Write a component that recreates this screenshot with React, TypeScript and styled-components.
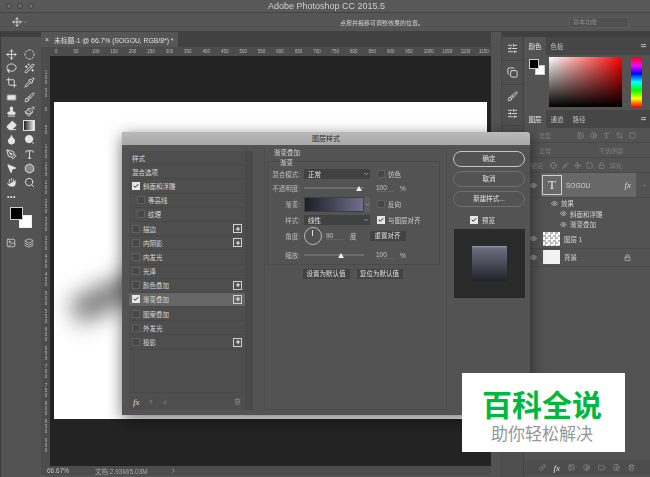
import React from "react";
import styled, { createGlobalStyle } from "styled-components";
import {
  Bandage, Brush, ChevronDown, ChevronRight, ChevronUp, CircleDashed, Copy, Crop, Droplet, Eraser, Eye, Folder, FilePlus,
  Hand, Hexagon, Image as ImageIcon, Lasso, Link, Lock, MousePointer2, Move, PenTool, Pipette, Plus,
  Search, Stamp, Trash2, Type, WandSparkles, Check, Layers, SlidersHorizontal, Crosshair, Square, ArrowUp, ArrowDown, Paintbrush, Contrast,
} from "lucide-react";

const Global = createGlobalStyle`
  html, body { margin: 0; padding: 0; background: #535353; }
  body { font-family: "Liberation Sans", "Noto Sans CJK SC", sans-serif; }
`;

const Stage = styled.div`
  position: relative;
  width: 650px;
  height: 477px;
  overflow: hidden;
  color: #d8d8d8;
  font-size: 6.5px;
  white-space: nowrap;
`;

const Screen = styled.div`
  width: 650px;
  height: 477px;
  display: flex;
  flex-direction: column;
  background: #535353;
  filter: blur(0.35px);
`;

const TitleBar = styled.div`
  height: 13px;
  flex: none;
  display: flex;
  align-items: center;
  padding-left: 6px;
  gap: 5px;
  background: #585858;
  border-bottom: 1px solid #444;
  box-sizing: border-box;
`;

const Light = styled.span`
  width: 6px;
  height: 6px;
  border-radius: 50%;
  background: #6a6a6a;
  border: 1px solid #3f3f3f;
  box-sizing: border-box;
`;

const AppTitle = styled.div`
  flex: 1;
  text-align: center;
  font-size: 9px;
  color: #cfcfcf;
  margin-right: 36px;
`;

const OptionsBar = styled.div`
  height: 19px;
  flex: none;
  display: flex;
  align-items: center;
  padding: 0 5px 0 12px;
  background: #555;
  border-bottom: 1px solid #414141;
  box-sizing: border-box;
`;

const Hint = styled.div`
  margin-left: 312px;
  color: #d0d0d0;
  font-size: 6px;
  width: 229px;
`;

const WorkspaceSelect = styled.div`
  width: 60px;
  height: 11px;
  background: #505050;
  border: 1px solid #5c5c5c;
  box-sizing: border-box;
  color: #8d8d8d;
  font-size: 6px;
  line-height: 9px;
  padding-left: 3px;
`;

const Main = styled.div`
  flex: 1;
  display: flex;
  min-height: 0;
`;

const ToolColumn = styled.div`
  width: 41px;
  flex: none;
  display: flex;
  flex-direction: column;
  border-left: 1px solid #3c3c3c;
  box-sizing: border-box;
`;

const Strip = styled.div`
  height: 5px;
  flex: none;
  background: #3f3f3f;
`;

const ToolGrid = styled.div`
  display: grid;
  grid-template-columns: 18px 18px;
  grid-auto-rows: 14.3px;
  padding: 10px 0 0 1px;
`;

const Tool = styled.div`
  display: flex;
  align-items: center;
  justify-content: center;
  color: #e4e4e4;
`;

const GradientTool = styled.div`
  width: 10px;
  height: 9px;
  border: 1px solid #ddd;
  background: linear-gradient(90deg, #222, #eee);
`;

const MoreDots = styled.div`
  font-size: 7px;
  line-height: 7px;
  letter-spacing: 0.5px;
  color: #ddd;
  padding: 3px 0 0 6px;
  font-weight: 700;
`;

const Swatches = styled.div`
  position: relative;
  width: 24px;
  height: 22px;
  margin: 7px 0 0 9px;
`;

const Swatch = styled.div<{ $tone: string; $front?: boolean }>`
  position: absolute;
  width: 13px;
  height: 13px;
  box-sizing: border-box;
  background: ${(p) => p.$tone};
  border: 1px solid ${(p) => (p.$front ? "#ccc" : "#eee")};
  left: ${(p) => (p.$front ? 0 : 9)}px;
  top: ${(p) => (p.$front ? 0 : 8)}px;
  z-index: ${(p) => (p.$front ? 1 : 0)};
`;

const ToolFooter = styled.div`
  display: grid;
  grid-template-columns: 18px 18px;
  padding: 9px 0 0 1px;
`;

const DocColumn = styled.div`
  width: 450px;
  flex: none;
  display: flex;
  flex-direction: column;
`;

const TabBar = styled.div`
  height: 15px;
  flex: none;
  background: #414141;
  display: flex;
`;

const DocTab = styled.div`
  width: 137px;
  background: #555;
  display: flex;
  align-items: center;
  gap: 5px;
  padding-left: 4px;
  box-sizing: border-box;
  font-size: 6.8px;
  color: #e0e0e0;
`;

const HRuler = styled.div`
  height: 9px;
  flex: none;
  display: flex;
  background: #4c4c4c;
  padding-left: 14px;
  overflow: hidden;
  color: #b8b8b8;
  font-size: 4.5px;
  line-height: 9px;
`;

const HMark = styled.span`
  width: 18.45px;
  flex: none;
`;

const DocBody = styled.div`
  flex: 1;
  display: flex;
  min-height: 0;
`;

const VRuler = styled.div`
  width: 9px;
  flex: none;
  background: #4c4c4c;
  padding-top: 14px;
  box-sizing: border-box;
  overflow: hidden;
  color: #b8b8b8;
  font-size: 4.5px;
  line-height: 5px;
  text-align: center;
`;

const VMark = styled.div`
  height: 18.4px;
  width: 4px;
  margin-left: 3px;
  white-space: normal;
  word-break: break-all;
`;

const Pasteboard = styled.div`
  flex: 1;
  background: #232323;
  padding: 46px 0 0 4px;
`;

const Paper = styled.div`
  position: relative;
  width: 433px;
  height: 317px;
  background: #fff;
  overflow: hidden;
`;

const Smear = styled.div`
  position: absolute;
  left: 17px;
  top: 182px;
  width: 74px;
  height: 26px;
  background: #777;
  filter: blur(11px);
  transform: rotate(-25deg);
`;

const StatusBar = styled.div`
  height: 9px;
  flex: none;
  margin-bottom: 2px;
  display: flex;
  align-items: center;
  background: #4c4c4c;
  padding-left: 6px;
  font-size: 6.5px;
  color: #c4c4c4;
`;

const Zoom = styled.span`
  width: 48px;
`;

const DocSize = styled.span`
  width: 75px;
  color: #a8a8a8;
`;

const Gutter = styled.div`
  width: 10px;
  flex: none;
`;

const Dock = styled.div`
  width: 22px;
  flex: none;
  display: flex;
  flex-direction: column;
  background: #4f4f4f;
  border-left: 1px solid #464646;
  box-sizing: border-box;
`;

const DockGroup = styled.div`
  display: flex;
  flex-direction: column;
  align-items: center;
  gap: 6px;
  padding: 6px 0;
  border-bottom: 1px solid #444;
  color: #ddd;
`;

const SidePanels = styled.div`
  width: 127px;
  flex: none;
  display: flex;
  flex-direction: column;
  border-left: 1px solid #424242;
  box-sizing: border-box;
`;

const PanelTabs = styled.div`
  height: 18px;
  flex: none;
  display: flex;
  align-items: stretch;
  background: #464646;
`;

const PanelTab = styled.div<{ $active?: boolean }>`
  width: 22px;
  display: flex;
  align-items: center;
  justify-content: center;
  font-size: 6.5px;
  background: ${(p) => (p.$active ? "#535353" : "transparent")};
  color: ${(p) => (p.$active ? "#e8e8e8" : "#bdbdbd")};
`;

const TabMenu = styled.div`
  margin-left: auto;
  align-self: center;
  width: 5px;
  height: 4px;
  margin-right: 4px;
  background: repeating-linear-gradient(#aaa 0 1px, #555 1px 2px);
`;

const ColorPanel = styled.div`
  height: 55px;
  flex: none;
  display: flex;
  box-sizing: border-box;
  padding-top: 2px;
`;

const ColorChips = styled.div`
  position: relative;
  width: 25px;
  flex: none;
`;

const Chip = styled.div<{ $front?: boolean }>`
  position: absolute;
  width: 10px;
  height: 10px;
  box-sizing: border-box;
  border: 1px solid #ccc;
  left: ${(p) => (p.$front ? 5 : 11)}px;
  top: ${(p) => (p.$front ? 2 : 8)}px;
  background: ${(p) => (p.$front ? "#000" : "#fff")};
  z-index: ${(p) => (p.$front ? 1 : 0)};
`;

const ColorField = styled.div`
  width: 73px;
  height: 50px;
  flex: none;
  background: linear-gradient(to bottom, transparent, #000), linear-gradient(to right, #fff, #f00);
`;

const HueBar = styled.div`
  width: 11px;
  height: 50px;
  margin-left: 9px;
  background: linear-gradient(to bottom, #f00, #f0f 17%, #00f 33%, #0ff 50%, #0f0 66%, #ff0 83%, #f00);
`;

const LayerTools = styled.div<{ $gap?: number }>`
  height: 14px;
  flex: none;
  display: flex;
  align-items: center;
  gap: ${(p) => p.$gap ?? 6}px;
  padding-left: 7px;
  color: #8e8e8e;
  font-size: 6px;
  border-bottom: 1px solid #494949;
`;

const Faded = styled.span<{ $left?: number }>`
  color: #7d7d7d;
  margin-left: ${(p) => p.$left ?? 0}px;
`;

const FilterGap = styled.span`
  width: 14px;
  flex: none;
`;

const LayerList = styled.div`
  display: flex;
  flex-direction: column;
  flex: 1;
  min-height: 0;
`;

const LayerRow = styled.div<{ $h: number }>`
  height: ${(p) => p.$h}px;
  display: flex;
  align-items: center;
  padding-left: 6px;
  flex: none;
  border-bottom: 1px solid #4a4a4a;
`;

const LayerEye = styled.div`
  width: 11px;
  flex: none;
  color: #cfcfcf;
  display: flex;
`;

const LayerBody = styled.div<{ $active?: boolean }>`
  flex: 1;
  height: 100%;
  display: flex;
  align-items: center;
  gap: 3px;
  margin-right: 14px;
  padding: 0 5px 0 1px;
  background: ${(p) => (p.$active ? "#686868" : "transparent")};
`;

const RowCaret = styled.span`
  margin-left: -12px;
  width: 12px;
  display: flex;
  justify-content: center;
  color: #bbb;
`;

const TextThumb = styled.div`
  width: 20px;
  height: 20px;
  flex: none;
  box-sizing: border-box;
  border: 1px solid #d0d0d0;
  display: flex;
  align-items: center;
  justify-content: center;
  font-family: "Liberation Serif", serif;
  font-size: 13px;
  color: #e8e8e8;
`;

const Thumb = styled.div<{ $checker?: boolean }>`
  width: 17px;
  height: 14px;
  flex: none;
  margin-left: 1px;
  background: ${(p) => (p.$checker ? "repeating-conic-gradient(#bbb 0 25%, #fff 0 50%) 0 0 / 5px 5px" : "#f2f2f2")};
`;

const LayerName = styled.span`
  flex: 1;
  color: #d4d4d4;
  padding-left: 1px;
`;

const FxMark = styled.span`
  font-family: "Liberation Serif", serif;
  font-style: italic;
  font-size: 9px;
  color: #ddd;
`;

const EffectRow = styled.div<{ $indent: number }>`
  height: 10.5px;
  flex: none;
  display: flex;
  align-items: center;
  gap: 3px;
  padding-left: ${(p) => p.$indent}px;
  color: #d4d4d4;
  & > svg { flex: none; }
`;

const LayerFooter = styled.div`
  height: 15px;
  flex: none;
  margin-bottom: 2px;
  display: flex;
  align-items: center;
  justify-content: flex-end;
  gap: 8px;
  padding-right: 15px;
  background: #4d4d4d;
  color: #949494;
`;

/* dialog floats over the workspace */
const Dialog = styled.div`
  position: absolute;
  left: 122px;
  top: 132px;
  width: 408px;
  height: 283px;
  display: flex;
  flex-direction: column;
  background: #535353;
  border-radius: 3px 3px 0 0;
  box-shadow: 0 4px 16px rgba(0, 0, 0, 0.55);
  filter: blur(0.35px);
`;

const DialogTitle = styled.div`
  height: 13px;
  flex: none;
  text-align: center;
  font-size: 7px;
  line-height: 13px;
  color: #2e2e2e;
  background: linear-gradient(#b9b9b9, #a9a9a9);
  border-radius: 3px 3px 0 0;
`;

const DialogBody = styled.div`
  flex: 1;
  display: flex;
  padding: 6px 5px 5px 7px;
  min-height: 0;
`;

const StyleList = styled.div`
  width: 124px;
  flex: none;
  display: flex;
  flex-direction: column;
  background: #4e4e4e;
  border-right: 8px solid #494949;
  box-sizing: border-box;
`;

const StyleRow = styled.div<{ $active?: boolean; $indent?: boolean }>`
  height: 14.2px;
  flex: none;
  box-sizing: border-box;
  display: flex;
  align-items: center;
  gap: 3px;
  padding: 0 3px 0 ${(p) => (p.$indent ? 8 : 3)}px;
  background: ${(p) => (p.$active ? "#666" : "transparent")};
  border-bottom: 1px solid #484848;
  color: #d8d8d8;
`;

const RowLabel = styled.span`
  flex: 1;
`;

const Box = styled.span<{ $checked?: boolean }>`
  width: 6px;
  height: 6px;
  flex: none;
  display: flex;
  align-items: center;
  justify-content: center;
  border: 1px solid ${(p) => (p.$checked ? "#e6e6e6" : "#5f5f5f")};
  background: ${(p) => (p.$checked ? "#e6e6e6" : "#474747")};
  color: #222;
`;

const AddBox = styled.span`
  width: 7px;
  height: 7px;
  flex: none;
  display: flex;
  align-items: center;
  justify-content: center;
  border: 1px solid #cfcfcf;
  color: #eee;
`;

const ListFooter = styled.div`
  margin-top: auto;
  height: 17px;
  display: flex;
  align-items: center;
  gap: 8px;
  padding: 0 4px;
  color: #8f8f8f;
  border-top: 1px solid #494949;
`;

const Settings = styled.div`
  width: 183px;
  margin: -3px 0 0 11px;
  flex: none;
  border-left: 1px solid #4c4c4c;
  border-right: 1px solid #4c4c4c;
  border-bottom: 1px solid #4c4c4c;
  box-sizing: border-box;
  display: flex;
  flex-direction: column;
  padding: 0 6px 0 2px;
`;

const SettingsHeading = styled.div`
  height: 13px;
  line-height: 10px;
  padding-left: 7px;
  flex: none;
`;

const GroupBox = styled.div`
  border: 1px solid #4a4a4a;
  height: 104px;
  flex: none;
  box-sizing: border-box;
  display: flex;
  flex-direction: column;
`;

const GroupTitle = styled.div`
  height: 6px;
  margin-top: -3px;
  padding-left: 12px;
  line-height: 7px;
  flex: none;
`;

const FieldRow = styled.div<{ $h: number }>`
  height: ${(p) => p.$h}px;
  flex: none;
  display: flex;
  align-items: center;
`;

const FieldLabel = styled.span`
  width: 32px;
  flex: none;
  text-align: right;
  margin-right: 4px;
  color: #bcbcbc;
`;

const Select = styled.div<{ $w?: number }>`
  width: ${(p) => p.$w ?? 66}px;
  height: 10px;
  flex: none;
  background: #414141;
  display: flex;
  align-items: center;
  justify-content: space-between;
  padding: 0 1px 0 4px;
  box-sizing: border-box;
  color: #e4e4e4;
`;

const Slider = styled.div<{ $pos: number }>`
  position: relative;
  width: 60px;
  height: 2px;
  flex: none;
  background: #6c6c6c;
  &::after {
    content: "";
    position: absolute;
    left: ${(p) => p.$pos}%;
    top: -1px;
    width: 0;
    height: 0;
    margin-left: -3px;
    border-left: 3px solid transparent;
    border-right: 3px solid transparent;
    border-bottom: 5px solid #eee;
  }
`;

const Value = styled.span<{ $left: number }>`
  margin-left: ${(p) => p.$left}px;
  width: 18px;
  color: #c4c4c4;
  flex: none;
  border-bottom: 1px solid #626262;
`;

const Unit = styled.span`
  margin-left: 6px;
  color: #c4c4c4;
`;

const Toggle = styled.label`
  display: flex;
  align-items: center;
  gap: 3px;
  margin-left: 7px;
  color: #d0d0d0;
`;

const GradientBar = styled.div`
  width: 60px;
  height: 15px;
  flex: none;
  background: linear-gradient(90deg, #1d1d24, #70708e);
  border: 1px solid #3e3e3e;
  box-sizing: border-box;
`;

const GradientArrow = styled.div`
  width: 6px;
  height: 15px;
  flex: none;
  background: #5d5d5d;
  color: #ddd;
  display: flex;
  align-items: center;
  justify-content: center;
`;

const Dial = styled.div`
  position: relative;
  width: 18px;
  height: 18px;
  flex: none;
  border-radius: 50%;
  border: 1px solid #b8b8b8;
  box-sizing: border-box;
  &::after {
    content: "";
    position: absolute;
    left: 7px;
    top: 2px;
    width: 1px;
    height: 6px;
    background: #ddd;
  }
`;

const FlatButton = styled.div<{ $left?: number; $w: number }>`
  width: ${(p) => p.$w}px;
  height: 10px;
  flex: none;
  margin-left: ${(p) => p.$left ?? 0}px;
  background: #424242;
  color: #e0e0e0;
  text-align: center;
  line-height: 10px;
`;

const ResetRow = styled.div`
  display: flex;
  justify-content: center;
  gap: 7px;
  margin-top: 4px;
  padding-right: 2px;
`;

const Actions = styled.div`
  margin-left: 6px;
  width: 72px;
  flex: none;
  display: flex;
  flex-direction: column;
`;

const PillButton = styled.div<{ $primary?: boolean }>`
  height: 16px;
  flex: none;
  margin-bottom: 4px;
  box-sizing: border-box;
  border-radius: 8px;
  border: 1px solid ${(p) => (p.$primary ? "#c4c4c4" : "#6f6f6f")};
  text-align: center;
  line-height: 14px;
  color: #e4e4e4;
  font-size: 6.5px;
`;

const PreviewToggle = styled.label`
  height: 13px;
  margin: 2px 0 3px 17px;
  display: flex;
  align-items: center;
  gap: 4px;
  color: #e0e0e0;
`;

const PreviewWell = styled.div`
  width: 71px;
  height: 69px;
  margin-left: 1px;
  flex: none;
  background: #2a2a2a;
  display: flex;
  align-items: center;
  justify-content: center;
`;

const PreviewTile = styled.div`
  width: 35px;
  height: 35px;
  background: linear-gradient(#9a9aaa 0, #6c6c80 6%, #23232b 100%);
`;

const Watermark = styled.div`
  position: absolute;
  left: 462px;
  top: 373px;
  width: 163px;
  height: 79px;
  background: #fff;
  display: flex;
  flex-direction: column;
  align-items: center;
  font-family: "Noto Sans CJK SC", sans-serif;
`;

const WatermarkName = styled.div`
  margin: 14px 3px 0 0;
  height: 32px;
  line-height: 32px;
  font-size: 30px;
  font-weight: 700;
  color: #00b93c;
`;

const WatermarkTag = styled.div`
  margin: 3px 3px 0 0;
  font-size: 17px;
  line-height: 22px;
  color: #979797;
`;

const tools = [
  <Move size={11} />, <CircleDashed size={11} />,
  <Lasso size={11} />, <WandSparkles size={11} />,
  <Crop size={11} />, <Pipette size={11} />,
  <Bandage size={11} fill="#e4e4e4" stroke="#777" />, <Brush size={11} />,
  <Stamp size={11} fill="#e4e4e4" />, <Paintbrush size={11} />,
  <Eraser size={11} fill="#e4e4e4" />, <GradientTool />,
  <Droplet size={11} fill="#e4e4e4" />, <Search size={11} fill="#e4e4e4" />,
  <PenTool size={11} />, <Type size={11} />,
  <MousePointer2 size={11} fill="#e4e4e4" />, <Hexagon size={11} fill="#888" />,
  <Hand size={11} fill="#e4e4e4" stroke="#555" />, <Search size={11} />,
];

const hMarks = [0, 50, 100, 150, 200, 250, 300, 350, 400, 450, 500, 550, 600, 650, 700, 750, 800, 850, 900, 950, 1000, 1050, 1100, 1150];
const vMarks = [100, 50, 0, 50, 100, 150, 200, 250, 300, 350, 400, 450, 500, 550, 600, 650, 700, 750, 800, 850, 900];

const styleRows: { label: string; checked?: boolean; box?: boolean; add?: boolean; indent?: boolean; active?: boolean }[] = [
  { label: "样式" },
  { label: "混合选项" },
  { label: "斜面和浮雕", box: true, checked: true },
  { label: "等高线", box: true, indent: true },
  { label: "纹理", box: true, indent: true },
  { label: "描边", box: true, add: true },
  { label: "内阴影", box: true, add: true },
  { label: "内发光", box: true },
  { label: "光泽", box: true },
  { label: "颜色叠加", box: true, add: true },
  { label: "渐变叠加", box: true, checked: true, add: true, active: true },
  { label: "图案叠加", box: true },
  { label: "外发光", box: true },
  { label: "投影", box: true, add: true },
];

function CheckBox({ checked }: { checked?: boolean }) {
  return <Box $checked={checked}>{checked && <Check size={6} strokeWidth={4} />}</Box>;
}

function Workspace() {
  return (
    <Screen>
      <TitleBar>
        <Light />
        <Light />
        <Light />
        <AppTitle>Adobe Photoshop CC 2015.5</AppTitle>
      </TitleBar>
      <OptionsBar>
        <Move size={10} color="#e4e4e4" />
        <ChevronDown size={6} color="#aaa" />
        <Hint>点按并拖移可调整效果的位置。</Hint>
        <WorkspaceSelect>基本功能</WorkspaceSelect>
      </OptionsBar>
      <Main>
        <ToolColumn>
          <Strip />
          <ToolGrid>
            {tools.map((icon, i) => (
              <Tool key={i}>{icon}</Tool>
            ))}
          </ToolGrid>
          <MoreDots>•••</MoreDots>
          <Swatches>
            <Swatch $tone="#000" $front />
            <Swatch $tone="#fff" />
          </Swatches>
          <ToolFooter>
            <Tool>
              <ImageIcon size={10} color="#ccc" />
            </Tool>
            <Tool>
              <Layers size={10} color="#ccc" />
            </Tool>
          </ToolFooter>
        </ToolColumn>
        <DocColumn>
          <TabBar>
            <DocTab>
              <span>×</span>
              <span>未标题-1 @ 66.7% (SOGOU, RGB/8*) *</span>
            </DocTab>
          </TabBar>
          <HRuler>
            {hMarks.map((m) => (
              <HMark key={m}>{m}</HMark>
            ))}
          </HRuler>
          <DocBody>
            <VRuler>
              {vMarks.map((m, i) => (
                <VMark key={i}>{m}</VMark>
              ))}
            </VRuler>
            <Pasteboard>
              <Paper>
                <Smear />
              </Paper>
            </Pasteboard>
          </DocBody>
          <StatusBar>
            <Zoom>66.67%</Zoom>
            <DocSize>文档:2.93M/5.03M</DocSize>
            <ChevronRight size={7} color="#bbb" />
          </StatusBar>
        </DocColumn>
        <Gutter />
        <Dock>
          <Strip />
          <DockGroup>
            <SlidersHorizontal size={11} />
          </DockGroup>
          <DockGroup>
            <Copy size={11} />
          </DockGroup>
          <DockGroup>
            <Brush size={11} />
            <SlidersHorizontal size={11} />
          </DockGroup>
          <DockGroup>
            <Type size={11} />
          </DockGroup>
        </Dock>
        <SidePanels>
          <Strip />
          <PanelTabs>
            <PanelTab $active>颜色</PanelTab>
            <PanelTab>色板</PanelTab>
            <TabMenu />
          </PanelTabs>
          <ColorPanel>
            <ColorChips>
              <Chip $front />
              <Chip />
            </ColorChips>
            <ColorField />
            <HueBar />
          </ColorPanel>
          <PanelTabs>
            <PanelTab $active>图层</PanelTab>
            <PanelTab>通道</PanelTab>
            <PanelTab>路径</PanelTab>
            <TabMenu />
          </PanelTabs>
          <LayerTools>
            <Faded $left={8}>类型</Faded>
            <FilterGap />
            <ImageIcon size={7} />
            <Contrast size={7} />
            <Type size={7} />
            <Crop size={7} />
            <Square size={7} />
          </LayerTools>
          <LayerTools>
            <Faded $left={8}>正常</Faded>
            <Faded $left={42}>不透明度:</Faded>
          </LayerTools>
          <LayerTools $gap={5}>
            <Faded>锁定:</Faded>
            <Crosshair size={7} />
            <Brush size={7} />
            <Move size={7} />
            <Square size={7} />
            <Lock size={7} />
            <Faded>填充:</Faded>
          </LayerTools>
          <LayerList>
            <LayerRow $h={24}>
              <LayerEye>
                <Eye size={7} />
              </LayerEye>
              <LayerBody $active>
                <TextThumb>T</TextThumb>
                <LayerName>SOGOU</LayerName>
                <FxMark>fx</FxMark>
              </LayerBody>
              <RowCaret>
                <ChevronUp size={5} />
              </RowCaret>
            </LayerRow>
            <EffectRow $indent={27}>
              <Eye size={7} />
              <span>效果</span>
            </EffectRow>
            <EffectRow $indent={36}>
              <Eye size={7} />
              <span>斜面和浮雕</span>
            </EffectRow>
            <EffectRow $indent={36}>
              <Eye size={7} />
              <span>渐变叠加</span>
            </EffectRow>
            <LayerRow $h={18}>
              <LayerEye>
                <Eye size={7} />
              </LayerEye>
              <LayerBody>
                <Thumb $checker />
                <LayerName>图层 1</LayerName>
              </LayerBody>
            </LayerRow>
            <LayerRow $h={17}>
              <LayerEye>
                <Eye size={7} />
              </LayerEye>
              <LayerBody>
                <Thumb />
                <LayerName>背景</LayerName>
                <Lock size={7} />
              </LayerBody>
            </LayerRow>
          </LayerList>
          <LayerFooter>
            <Link size={7} />
            <FxMark>fx</FxMark>
            <ImageIcon size={7} />
            <Contrast size={7} />
            <Folder size={7} />
            <FilePlus size={7} />
            <Trash2 size={7} />
          </LayerFooter>
        </SidePanels>
      </Main>
    </Screen>
  );
}

function LayerStyleDialog() {
  return (
    <Dialog>
      <DialogTitle>图层样式</DialogTitle>
      <DialogBody>
        <StyleList>
          {styleRows.map((r) => (
            <StyleRow key={r.label} $active={r.active} $indent={r.indent}>
              {r.box && <CheckBox checked={r.checked} />}
              <RowLabel>{r.label}</RowLabel>
              {r.add && (
                <AddBox>
                  <Plus size={6} strokeWidth={4} />
                </AddBox>
              )}
            </StyleRow>
          ))}
          <ListFooter>
            <FxMark>fx</FxMark>
            <ArrowUp size={6} />
            <ArrowDown size={6} />
            <Trash2 size={7} style={{ marginLeft: "auto" }} />
          </ListFooter>
        </StyleList>
        <Settings>
          <SettingsHeading>渐变叠加</SettingsHeading>
          <GroupBox>
            <GroupTitle>渐变</GroupTitle>
            <FieldRow $h={18}>
              <FieldLabel>混合模式:</FieldLabel>
              <Select>
                正常
                <ChevronDown size={6} />
              </Select>
              <Toggle>
                <CheckBox />
                仿色
              </Toggle>
            </FieldRow>
            <FieldRow $h={10}>
              <FieldLabel>不透明度:</FieldLabel>
              <Slider $pos={92} />
              <Value $left={12}>100</Value>
              <Unit>%</Unit>
            </FieldRow>
            <FieldRow $h={22}>
              <FieldLabel>渐变:</FieldLabel>
              <GradientBar />
              <GradientArrow>
                <ChevronDown size={5} />
              </GradientArrow>
              <Toggle>
                <CheckBox />
                反向
              </Toggle>
            </FieldRow>
            <FieldRow $h={10}>
              <FieldLabel>样式:</FieldLabel>
              <Select>
                线性
                <ChevronDown size={6} />
              </Select>
              <Toggle>
                <CheckBox checked />
                与图层对齐
              </Toggle>
            </FieldRow>
            <FieldRow $h={22}>
              <FieldLabel>角度:</FieldLabel>
              <Dial />
              <Value $left={4}>90</Value>
              <Unit>度</Unit>
              <FlatButton $left={13} $w={36}>
                重置对齐
              </FlatButton>
            </FieldRow>
            <FieldRow $h={16}>
              <FieldLabel>缩放:</FieldLabel>
              <Slider $pos={62} />
              <Value $left={12}>100</Value>
              <Unit>%</Unit>
            </FieldRow>
          </GroupBox>
          <ResetRow>
            <FlatButton $w={47}>设置为默认值</FlatButton>
            <FlatButton $w={46}>复位为默认值</FlatButton>
          </ResetRow>
        </Settings>
        <Actions>
          <PillButton $primary>确定</PillButton>
          <PillButton>取消</PillButton>
          <PillButton>新建样式...</PillButton>
          <PreviewToggle>
            <CheckBox checked />
            预览
          </PreviewToggle>
          <PreviewWell>
            <PreviewTile />
          </PreviewWell>
        </Actions>
      </DialogBody>
    </Dialog>
  );
}

export default function App() {
  return (
    <Stage>
      <Global />
      <Workspace />
      <LayerStyleDialog />
      <Watermark>
        <WatermarkName>百科全说</WatermarkName>
        <WatermarkTag>助你轻松解决</WatermarkTag>
      </Watermark>
    </Stage>
  );
}
